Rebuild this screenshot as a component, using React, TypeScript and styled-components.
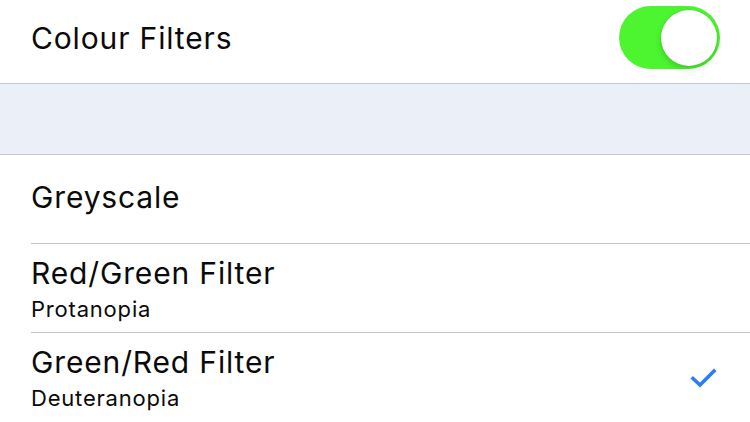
import React from "react";
import styled, { createGlobalStyle } from "styled-components";

const Global = createGlobalStyle`
  html, body { margin: 0; padding: 0; background: #ffffff; }
  body { font-family: Inter, "Liberation Sans", Arial, sans-serif; -webkit-font-smoothing: antialiased; }
`;

const Page = styled.div`
  width: 750px;
  height: 422px;
  overflow: hidden;
  display: flex;
  flex-direction: column;
  background: #ffffff;
`;

const ToggleRow = styled.div`
  height: 84px;
  display: flex;
  align-items: center;
  justify-content: space-between;
  padding: 0 30px 8px 31px;
  box-sizing: border-box;
  border-bottom: 1px solid #c4c7cc;
  flex: none;
`;

const Title = styled.div`
  font-size: 30px;
  color: #0a0a0a;
  letter-spacing: 0.85px;
  line-height: 34px;
`;

const Subtitle = styled.div`
  font-size: 22px;
  color: #0a0a0a;
  letter-spacing: 0.8px;
  line-height: 26px;
  margin-top: 6px;
`;

const Switch = styled.div<{ on: boolean }>`
  width: 101px;
  height: 63px;
  border-radius: 32px;
  background: ${(p) => (p.on ? "#4cf530" : "#e5e5ea")};
  display: flex;
  align-items: center;
  justify-content: ${(p) => (p.on ? "flex-end" : "flex-start")};
  padding: 0 3px;
  box-sizing: border-box;
`;

const Knob = styled.div`
  width: 56px;
  height: 56px;
  border-radius: 50%;
  background: #ffffff;
  box-shadow: 0 3px 6px rgba(0, 0, 0, 0.18), 0 0 1px rgba(0, 0, 0, 0.15);
`;

const Band = styled.div`
  height: 70px;
  background: #ebeff7;
  border-bottom: 1px solid #c4c7cc;
  flex: none;
`;

const List = styled.div`
  display: flex;
  flex-direction: column;
`;

const Option = styled.div<{ last?: boolean }>`
  height: 88px;
  margin-left: 31px;
  padding-right: 32px;
  display: flex;
  align-items: center;
  justify-content: space-between;
  border-bottom: ${(p) => (p.last ? "none" : "1px solid #c4c7cc")};
  flex: none;
`;

const Texts = styled.div<{ twoLine?: boolean }>`
  display: flex;
  flex-direction: column;
  padding-top: ${(p) => (p.twoLine ? "2px" : "0")};
  margin-top: ${(p) => (p.twoLine ? "0" : "-4px")};
`;

const CheckMark = styled.svg`
  margin-top: 4px;
  flex: none;
`;

const Check = () => (
  <CheckMark width="28" height="22" viewBox="0 0 28 22">
    <path d="M3 10.5 L10 17 L24 3" fill="none" stroke="#2a7ef5" strokeWidth="3.6" strokeLinecap="square" />
  </CheckMark>
);

const options = [
  { title: "Greyscale" },
  { title: "Red/Green Filter", sub: "Protanopia" },
  { title: "Green/Red Filter", sub: "Deuteranopia", checked: true },
];

export default function App() {
  return (
    <Page>
      <Global />
      <ToggleRow>
        <Title>Colour Filters</Title>
        <Switch on>
          <Knob />
        </Switch>
      </ToggleRow>
      <Band />
      <List>
        {options.map((o, i) => (
          <Option key={o.title} last={i === options.length - 1}>
            <Texts twoLine={!!o.sub}>
              <Title>{o.title}</Title>
              {o.sub && <Subtitle>{o.sub}</Subtitle>}
            </Texts>
            {o.checked && <Check />}
          </Option>
        ))}
      </List>
    </Page>
  );
}
